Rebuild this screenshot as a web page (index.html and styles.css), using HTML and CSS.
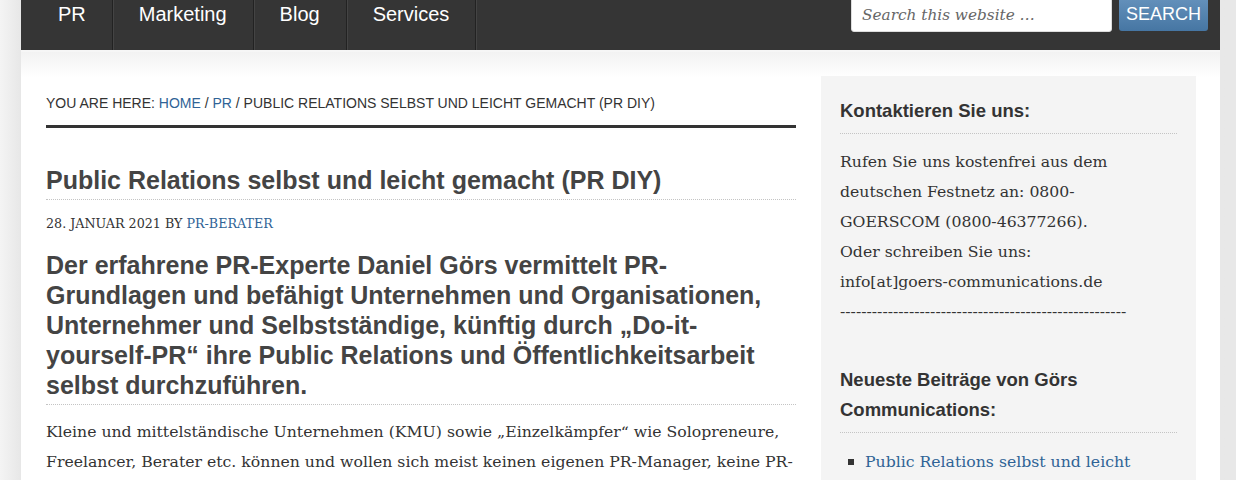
FILE: index.html
```html
<!DOCTYPE html>
<html lang="de">
<head>
  <meta charset="UTF-8">
  <title>Public Relations selbst und leicht gemacht (PR DIY)</title>
  <link rel="stylesheet" href="styles.css">
</head>
<body>

  <div class="wrap">
    <div class="nav-primary">
      <ul class="menu">
        <li><a href="#">PR</a></li>
        <li><a href="#">Marketing</a></li>
        <li><a href="#">Blog</a></li>
        <li><a href="#">Services</a></li>
      </ul>
      <form class="search-form">
        <input type="search" placeholder="Search this website …">
        <button type="button">SEARCH</button>
      </form>
    </div>

    <div class="site-inner">
      <div class="content">
        <div class="breadcrumb">
          YOU ARE HERE: <a href="#">HOME</a> / <a href="#">PR</a> / PUBLIC RELATIONS SELBST UND LEICHT GEMACHT (PR DIY)
        </div>

        <h1 class="entry-title">Public Relations selbst und leicht gemacht (PR DIY)</h1>
        <p class="entry-meta">28. JANUAR 2021 BY <a href="#">PR-BERATER</a></p>

        <h2 class="lead">Der erfahrene PR-Experte Daniel Görs vermittelt PR-Grundlagen und befähigt Unternehmen und Organisationen, Unternehmer und Selbstständige, künftig durch „Do-it-yourself-PR“ ihre Public Relations und Öffentlichkeitsarbeit selbst durchzuführen.</h2>

        <p class="entry-text">Kleine und mittelständische Unternehmen (KMU) sowie „Einzelkämpfer“ wie Solopreneure, Freelancer, Berater etc. können und wollen sich meist keinen eigenen PR-Manager, keine PR-Agentur leisten.</p>
      </div>

      <div class="sidebar">
        <div class="widget">
          <h4 class="widget-title">Kontaktieren Sie uns:</h4>
          <p class="contact">Rufen Sie uns kostenfrei aus dem deutschen Festnetz an: 0800-GOERSCOM (0800-46377266).<br>
          Oder schreiben Sie uns:<br>
          info[at]goers-communications.de<br>
          ------------------------------------------------------</p>
        </div>

        <div class="widget">
          <h4 class="widget-title">Neueste Beiträge von Görs Communications:</h4>
          <ul class="recent">
            <li><a href="#">Public Relations selbst und leicht gemacht (PR DIY)</a></li>
          </ul>
        </div>
      </div>
    </div>
  </div>

</body>
</html>
```

FILE: styles.css
```css
body {
  margin: 0;
  background: linear-gradient(to right, #f4f4f4 0, #e7e7e7 21px, #e8e8e8 100%);
  font-family: "DejaVu Serif", Georgia, serif;
  color: #333;
  overflow: hidden;
}

a {
  color: #2f6396;
  text-decoration: none;
}

.wrap {
  width: 1199px;
  margin-left: 21px;
  background-color: #fff;
}

/* navigation */

.nav-primary {
  display: flex;
  justify-content: space-between;
  background-color: #353535;
  height: 50px;
}

.menu {
  display: flex;
  list-style: none;
  margin: 0;
  padding: 0 0 0 11px;
}

.menu li {
  border-right: 1px solid #222;
  box-shadow: 1px 0 0 #444;
}

.menu a {
  display: block;
  padding: 1px 26px 0;
  line-height: 27px;
  font-family: "Liberation Sans", Arial, sans-serif;
  font-size: 20px;
  color: #fff;
}

.search-form {
  display: flex;
  gap: 7px;
  padding-right: 12px;
  margin-top: -8px;
}

.search-form input {
  width: 261px;
  height: 40px;
  box-sizing: border-box;
  padding: 5px 10px 0;
  border: 1px solid #ddd;
  border-radius: 3px;
  background-color: #fff;
  font-family: "DejaVu Serif", Georgia, serif;
  font-style: italic;
  font-size: 15.3px;
  color: #555;
}

.search-form input::placeholder {
  color: #666;
}

.search-form button {
  width: 89px;
  height: 39px;
  padding: 6px 0 0;
  border: 0;
  border-radius: 3px;
  background: linear-gradient(#6a96c0, #4676a3);
  font-family: "Liberation Sans", Arial, sans-serif;
  font-size: 18px;
  color: #fff;
}

/* main area */

.site-inner {
  display: flex;
  gap: 25px;
  padding: 24px 24px 0 25px;
  background: linear-gradient(#f2f2f2 0, #fff 26px);
  border-top: 2px solid #f6f6f6;
  height: 430px;
}

.content {
  width: 750px;
  padding-top: 17px;
}

.breadcrumb {
  font-family: "Liberation Sans", Arial, sans-serif;
  font-size: 14px;
  line-height: 20px;
  padding-bottom: 12px;
  border-bottom: 3px solid #333;
}

.entry-title {
  margin: 37px 0 0;
  padding-bottom: 4px;
  border-bottom: 1px dotted #c4c4c4;
  font-family: "Liberation Sans", Arial, sans-serif;
  font-size: 25px;
  line-height: 30px;
  color: #444;
}

.entry-meta {
  margin: 14px 0 0;
  font-size: 12.7px;
  line-height: 20px;
}

.lead {
  margin: 16px 0 0;
  padding-bottom: 4px;
  border-bottom: 1px dotted #c4c4c4;
  font-family: "Liberation Sans", Arial, sans-serif;
  font-size: 25px;
  line-height: 30px;
  color: #444;
}

.entry-text {
  margin: 12px 0 0;
  font-size: 15.7px;
  line-height: 30px;
}

/* sidebar */

.sidebar {
  width: 375px;
  box-sizing: border-box;
  padding: 20px 19px;
  background-color: #f4f4f4;
}

.widget {
  margin-bottom: 38px;
}

.widget-title {
  margin: 0;
  padding-bottom: 7px;
  border-bottom: 1px dotted #c4c4c4;
  font-family: "Liberation Sans", Arial, sans-serif;
  font-size: 18.5px;
  line-height: 30px;
  color: #333;
}

.widget p {
  margin: 13px 0 0;
  font-size: 15.7px;
  line-height: 30px;
}

.contact {
  max-width: 310px;
}

.recent {
  list-style: none;
  margin: 14px 0 0;
  padding: 0;
  font-size: 15.7px;
  line-height: 30px;
}

.recent li {
  display: flex;
  gap: 11px;
  padding-left: 8px;
}

.recent li::before {
  content: "";
  flex: none;
  width: 6px;
  height: 6px;
  margin-top: 12px;
  background-color: #333;
}
```
